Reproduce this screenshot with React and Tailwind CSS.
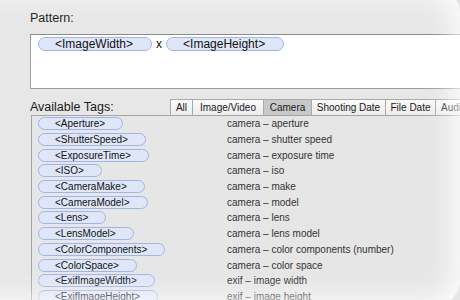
import React from "react";

const tags = [
  ["Aperture", "camera – aperture"],
  ["ShutterSpeed", "camera – shutter speed"],
  ["ExposureTime", "camera – exposure time"],
  ["ISO", "camera – iso"],
  ["CameraMake", "camera – make"],
  ["CameraModel", "camera – model"],
  ["Lens", "camera – lens"],
  ["LensModel", "camera – lens model"],
  ["ColorComponents", "camera – color components (number)"],
  ["ColorSpace", "camera – color space"],
  ["ExifImageWidth", "exif – image width"],
  ["ExifImageHeight", "exif – image height"],
];

const tabs = [
  { label: "All", w: "w-[22px] justify-center" },
  { label: "Image/Video", w: "w-[71px] justify-center" },
  { label: "Camera", w: "w-[48px] justify-center", active: true },
  { label: "Shooting Date", w: "w-[74px] justify-center" },
  { label: "File Date", w: "w-[50px] justify-center" },
  { label: "Audio", w: "w-[40px] pl-[5px]" },
];

const Token = ({ name, big }) => (
  <span
    className={`inline-flex items-center rounded-full border border-[#9fb5e6] bg-[#dfe6f8] text-[#111] whitespace-nowrap ${
      big ? "h-[14px] pl-[16px] pr-[18px] text-[12px]" : "h-[13px] pl-[16px] pr-[17px] text-[10px]"
    }`}
  >
    &lt;{name}&gt;
  </span>
);

const App = () => {
  return (
    <div className="relative w-[460px] h-[300px] overflow-hidden bg-[#e7e7e7] font-['Liberation_Sans',Arial,sans-serif] text-[#222]">
      <div className="pl-[30px] pt-[9px]">
        <div className="h-[18px] leading-[18px] text-[12.5px] text-[#1a1a1a]">
          Pattern:
        </div>
        <div className="mt-[7px] h-[55px] w-[460px] border border-[#9e9e9e] border-t-[#8c8c8c] bg-white pl-[7px] pt-[2px]">
          <div className="flex items-center h-[14px] leading-none">
            <Token name="ImageWidth" big />
            <span className="text-[12px] w-[14px] text-center text-[#111]">x</span>
            <Token name="ImageHeight" big />
          </div>
        </div>
        <div className="mt-[10px] flex h-[16px]">
          <div className="w-[140px] shrink-0 text-[12.5px] leading-[16px] text-[#1a1a1a]">
            Available Tags:
          </div>
          <div className="flex shrink-0">
            {tabs.map((t) => (
              <div
                key={t.label}
                className={`${t.w} shrink-0 h-[16px] flex items-center border-t border-l border-[#a9a9a9] text-[10px] whitespace-nowrap overflow-hidden ${
                  t.active
                    ? "bg-[#c8c8c8] text-[#1a1a1a]"
                    : "bg-gradient-to-b from-[#fafafa] to-[#ececec] text-[#1a1a1a]"
                }`}
              >
                {t.label}
              </div>
            ))}
          </div>
        </div>
        <div className="ml-[1px] border-t border-l border-[#a4a4a4] bg-[#e6e6e6]">
          {tags.map(([name, desc]) => (
            <div key={name} className="flex items-center h-[15.7px]">
              <div className="w-[195px] shrink-0 pl-[6px] flex items-center">
                <Token name={name} />
              </div>
              <div className="text-[10px] text-[#333] whitespace-nowrap">{desc}</div>
            </div>
          ))}
        </div>
      </div>
      <div className="pointer-events-none absolute left-[-40px] top-[-12px] right-[0px] bottom-[-6px] rounded-[26px] shadow-[inset_0_0_30px_5px_white]" />
    </div>
  );
};

export default App;
